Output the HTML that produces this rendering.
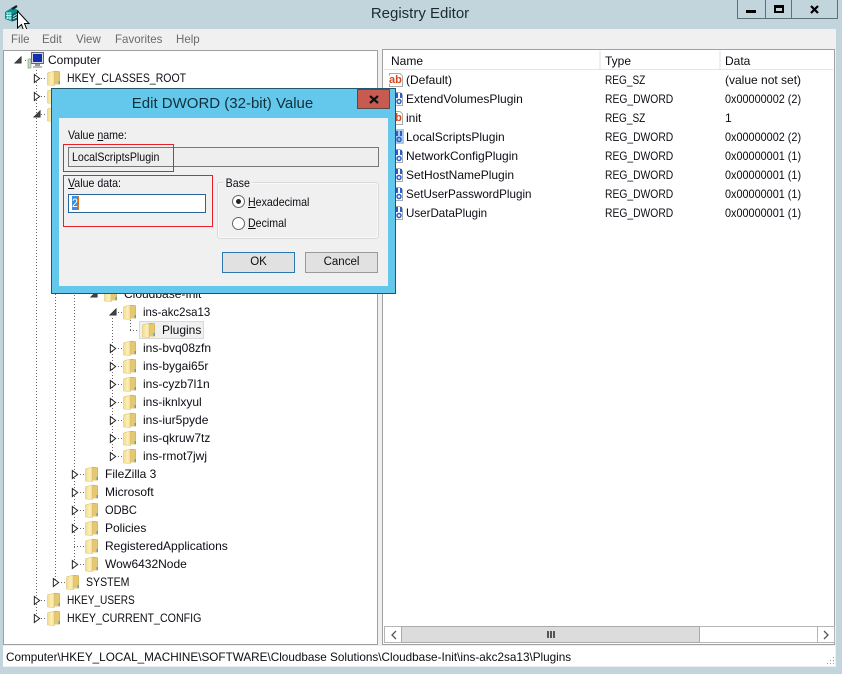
<!DOCTYPE html>
<html><head><meta charset="utf-8"><title>Registry Editor</title>
<style>
html,body{margin:0;padding:0}
body{width:842px;height:674px;overflow:hidden;position:relative;background:#c2d5dc;font-family:"Liberation Sans",sans-serif;font-size:12px;color:#0c0c14}
div,svg,span.a{position:absolute}
.t{position:absolute;line-height:18px;height:18px;white-space:nowrap;transform-origin:0 50%}
.m{color:#6a6a6a;top:30px;transform:scaleX(.96)}
.v{position:absolute;width:1px;background:repeating-linear-gradient(to bottom,#666 0 1px,transparent 1px 3px)}
.h{position:absolute;height:1px;background:repeating-linear-gradient(to right,#666 0 1px,transparent 1px 3px)}
u{text-decoration:underline}
.k{transform:scaleX(.875)}
.dw{transform:scaleX(.86)}
.sz{transform:scaleX(.84)}
.hx{transform:scaleX(.905)}
.dl{font-size:12px;transform:scaleX(.885)}
.btn{position:absolute;top:252px;width:71px;height:19px;line-height:19px;text-align:center;background:#e1e1e1;border:1px solid #9a9a9a;font-size:11.500px}
</style></head><body>
<svg width="0" height="0" style="position:absolute">
<defs>
<linearGradient id="fg" x1="0" x2="1" y1="0" y2="0"><stop offset="0" stop-color="#f3dc8c"/><stop offset=".6" stop-color="#fbf0bc"/><stop offset="1" stop-color="#f0d888"/></linearGradient>
<symbol id="f" viewBox="0 0 14 16"><path d="M1 2.500 L8 1 L13 1.500 V14.500 H1 Z" fill="#c9a64e"/><path d="M.5 3 L7.500 1 V15.500 L.5 15 Z" fill="url(#fg)" stroke="#e0c878" stroke-width=".6"/><path d="M8 2 H12.500 V14.500 H8 Z" fill="#e6c872"/><rect x="11.500" y="11" width="1.500" height="3" fill="#4fa3dc"/></symbol>
<symbol id="e" viewBox="0 0 9 11"><path d="M1.500 1 L7.500 5.500 L1.500 10 Z" fill="#fff" stroke="#222" stroke-width="1.100"/></symbol>
<symbol id="o" viewBox="0 0 9 9"><path d="M8 1 V8 H1 Z" fill="#444" stroke="#333"/></symbol>
<symbol id="ab" viewBox="0 0 16 16"><path d="M1.500 1.500 H12 L14.500 4 V14.500 H1.500 Z" fill="#fff" stroke="#aaa"/><rect x="1" y="3.500" width="13" height="8" fill="#fff"/><text x="1" y="11" font-family="Liberation Sans" font-size="11" font-weight="bold" fill="#d8481f">ab</text></symbol>
<symbol id="d" viewBox="0 0 16 16"><path d="M1.500 1.500 H12 L14.500 4 V14.500 H1.500 Z" fill="#fff" stroke="#aaa"/><rect x="8" y="2" width="2" height="5" fill="#2a5fd0"/><rect x="12" y="2" width="2" height="5" fill="#2a5fd0"/><circle cx="11" cy="10.500" r="2" fill="none" stroke="#2a5fd0" stroke-width="1.500"/></symbol>
</defs></svg>

<!-- title bar -->
<svg style="left:4px;top:5px" width="17" height="17" viewBox="0 0 17 17"><path d="M1 7 L9 2 L15 6 V14 L8 16.500 L1 14 Z" fill="#0d8f8c"/><path d="M8 9.500 L15 6 V14 L8 16.500 Z" fill="#0b5a62"/><path d="M2 8 H7.500 M2 10.500 H7.500 M2 13 H7.500 M3.800 7.500 V14 M6 7.500 V15 M9 11.500 L14.500 8.500 M9 14 L14.500 11" stroke="#c8f4f2" stroke-width=".9"/><path d="M8 4 L13 1" stroke="#123" stroke-width="2.200"/></svg>
<svg style="left:16px;top:10px" width="14" height="23" viewBox="0 0 14 23"><path d="M1.500 1 V18 L5.500 14.500 L8 21.500 L11 20 L8.500 13.500 L13 13.500 Z" fill="#fff" stroke="#000" stroke-width="1"/></svg>
<div class="t" style="left:0;width:840px;top:5px;font-size:15px;text-align:center;color:#1c2a30">Registry Editor</div>
<div style="left:737px;top:0;width:99px;height:18px;border:solid #5e7078;border-width:0 1px 1px 1px"></div>
<div style="left:765px;top:0;width:1px;height:19px;background:#5e7078"></div>
<div style="left:791px;top:0;width:1px;height:19px;background:#5e7078"></div>
<div style="left:746px;top:10px;width:10px;height:3px;background:#000"></div>
<div style="left:774px;top:5px;width:6px;height:3px;border:2px solid #000;border-top-width:3px"></div>
<svg style="left:810px;top:5px" width="9" height="9" viewBox="0 0 9 9"><path d="M1 1 L8 8 M8 1 L1 8" stroke="#000" stroke-width="2.200"/></svg>

<!-- client -->
<div style="left:3px;top:29px;width:833px;height:638px;background:#f0f0f0"></div>
<span class="t m" style="left:11px">File</span>
<span class="t m" style="left:42px">Edit</span>
<span class="t m" style="left:76px">View</span>
<span class="t m" style="left:115px">Favorites</span>
<span class="t m" style="left:176px">Help</span>

<!-- tree pane -->
<div style="left:3px;top:50px;width:373px;height:593px;background:#fff;border:1px solid #a0a0a0"></div>
<!-- list pane -->
<div style="left:382px;top:49px;width:451px;height:594px;background:#fff;border:1px solid #a0a0a0"></div>

<!-- tree lines -->
<div class="v" style="left:36px;top:67px;height:552px"></div>
<div class="v" style="left:55px;top:120px;height:463px"></div>
<div class="v" style="left:74px;top:280px;height:285px"></div>
<div class="v" style="left:112px;top:318px;height:139px"></div>
<div class="v" style="left:130px;top:320px;height:10px"></div>
<div class="h" style="left:130px;top:330px;width:10px"></div>
<div class="h" style="left:25px;top:60px;width:5px"></div>
<div class="h" style="left:41px;top:78px;width:5px"></div>
<div class="h" style="left:41px;top:96px;width:5px"></div>
<div class="h" style="left:41px;top:114px;width:5px"></div>
<div class="h" style="left:41px;top:600px;width:5px"></div>
<div class="h" style="left:41px;top:618px;width:5px"></div>
<div class="h" style="left:61px;top:582px;width:5px"></div>
<div class="h" style="left:80px;top:474px;width:5px"></div>
<div class="h" style="left:80px;top:492px;width:5px"></div>
<div class="h" style="left:80px;top:510px;width:5px"></div>
<div class="h" style="left:80px;top:528px;width:5px"></div>
<div class="h" style="left:74px;top:546px;width:11px"></div>
<div class="h" style="left:80px;top:564px;width:5px"></div>
<div class="h" style="left:118px;top:312px;width:5px"></div>
<div class="h" style="left:118px;top:348px;width:5px"></div>
<div class="h" style="left:118px;top:366px;width:5px"></div>
<div class="h" style="left:118px;top:384px;width:5px"></div>
<div class="h" style="left:118px;top:402px;width:5px"></div>
<div class="h" style="left:118px;top:420px;width:5px"></div>
<div class="h" style="left:118px;top:438px;width:5px"></div>
<div class="h" style="left:118px;top:456px;width:5px"></div>

<!-- tree expanders -->
<svg style="left:14px;top:56px" width="8" height="8"><use href="#o"/></svg>
<svg style="left:33px;top:73px" width="8" height="11"><use href="#e"/></svg>
<svg style="left:33px;top:91px" width="8" height="11"><use href="#e"/></svg>
<svg style="left:33px;top:110px" width="8" height="8"><use href="#o"/></svg>
<svg style="left:33px;top:595px" width="8" height="11"><use href="#e"/></svg>
<svg style="left:33px;top:613px" width="8" height="11"><use href="#e"/></svg>
<svg style="left:52px;top:577px" width="8" height="11"><use href="#e"/></svg>
<svg style="left:71px;top:469px" width="8" height="11"><use href="#e"/></svg>
<svg style="left:71px;top:487px" width="8" height="11"><use href="#e"/></svg>
<svg style="left:71px;top:505px" width="8" height="11"><use href="#e"/></svg>
<svg style="left:71px;top:523px" width="8" height="11"><use href="#e"/></svg>
<svg style="left:71px;top:559px" width="8" height="11"><use href="#e"/></svg>
<svg style="left:90px;top:290px" width="8" height="8"><use href="#o"/></svg>
<svg style="left:109px;top:308px" width="8" height="8"><use href="#o"/></svg>
<svg style="left:109px;top:343px" width="8" height="11"><use href="#e"/></svg>
<svg style="left:109px;top:361px" width="8" height="11"><use href="#e"/></svg>
<svg style="left:109px;top:379px" width="8" height="11"><use href="#e"/></svg>
<svg style="left:109px;top:397px" width="8" height="11"><use href="#e"/></svg>
<svg style="left:109px;top:415px" width="8" height="11"><use href="#e"/></svg>
<svg style="left:109px;top:433px" width="8" height="11"><use href="#e"/></svg>
<svg style="left:109px;top:451px" width="8" height="11"><use href="#e"/></svg>

<!-- computer icon -->
<svg style="left:27px;top:51px" width="18" height="18" viewBox="0 0 18 18"><rect x="4.500" y="1.500" width="12" height="11" fill="#d8d8e0" stroke="#667"/><rect x="6" y="3" width="9" height="8" fill="#1030b0"/><rect x="8" y="13" width="5" height="2" fill="#999"/><rect x="6" y="15" width="9" height="2" fill="#bbb"/><rect x="1" y="8" width="3" height="9" fill="#c8d8c8" stroke="#7a9a7a" stroke-width=".6"/></svg>

<!-- folders -->
<svg style="left:47px;top:70px" width="14" height="16"><use href="#f"/></svg>
<svg style="left:47px;top:88px" width="14" height="16"><use href="#f"/></svg>
<svg style="left:47px;top:106px" width="14" height="16"><use href="#f"/></svg>
<svg style="left:47px;top:592px" width="14" height="16"><use href="#f"/></svg>
<svg style="left:47px;top:610px" width="14" height="16"><use href="#f"/></svg>
<svg style="left:66px;top:574px" width="14" height="16"><use href="#f"/></svg>
<svg style="left:85px;top:466px" width="14" height="16"><use href="#f"/></svg>
<svg style="left:85px;top:484px" width="14" height="16"><use href="#f"/></svg>
<svg style="left:85px;top:502px" width="14" height="16"><use href="#f"/></svg>
<svg style="left:85px;top:520px" width="14" height="16"><use href="#f"/></svg>
<svg style="left:85px;top:538px" width="14" height="16"><use href="#f"/></svg>
<svg style="left:85px;top:556px" width="14" height="16"><use href="#f"/></svg>
<svg style="left:104px;top:286px" width="14" height="16"><use href="#f"/></svg>
<svg style="left:123px;top:304px" width="14" height="16"><use href="#f"/></svg>
<svg style="left:123px;top:340px" width="14" height="16"><use href="#f"/></svg>
<svg style="left:123px;top:358px" width="14" height="16"><use href="#f"/></svg>
<svg style="left:123px;top:376px" width="14" height="16"><use href="#f"/></svg>
<svg style="left:123px;top:394px" width="14" height="16"><use href="#f"/></svg>
<svg style="left:123px;top:412px" width="14" height="16"><use href="#f"/></svg>
<svg style="left:123px;top:430px" width="14" height="16"><use href="#f"/></svg>
<svg style="left:123px;top:448px" width="14" height="16"><use href="#f"/></svg>

<!-- selected -->
<div style="left:139px;top:321px;width:63px;height:16px;background:#f0f0f0;border:1px solid #d9d9d9"></div>
<svg style="left:142px;top:322px" width="14" height="16"><use href="#f"/></svg>

<!-- tree text -->
<span class="t" style="left:48px;top:51px">Computer</span>
<span class="t k" style="left:67px;top:69px">HKEY_CLASSES_ROOT</span>
<span class="t" style="left:124px;top:285px">Cloudbase-Init</span>
<span class="t" style="left:143px;top:303px;transform:scaleX(.95)">ins-akc2sa13</span>
<span class="t" style="left:162px;top:321px">Plugins</span>
<span class="t" style="left:143px;top:339px">ins-bvq08zfn</span>
<span class="t" style="left:143px;top:357px">ins-bygai65r</span>
<span class="t" style="left:143px;top:375px">ins-cyzb7l1n</span>
<span class="t" style="left:143px;top:393px">ins-iknlxyul</span>
<span class="t" style="left:143px;top:411px">ins-iur5pyde</span>
<span class="t" style="left:143px;top:429px">ins-qkruw7tz</span>
<span class="t" style="left:143px;top:447px">ins-rmot7jwj</span>
<span class="t" style="left:105px;top:465px">FileZilla 3</span>
<span class="t" style="left:105px;top:483px">Microsoft</span>
<span class="t" style="left:105px;top:501px;transform:scaleX(.92)">ODBC</span>
<span class="t" style="left:105px;top:519px">Policies</span>
<span class="t" style="left:105px;top:537px">RegisteredApplications</span>
<span class="t" style="left:105px;top:555px">Wow6432Node</span>
<span class="t" style="left:86px;top:573px;transform:scaleX(.88)">SYSTEM</span>
<span class="t" style="left:67px;top:591px;transform:scaleX(.84)">HKEY_USERS</span>
<span class="t" style="left:67px;top:609px;transform:scaleX(.888)">HKEY_CURRENT_CONFIG</span>

<!-- list header -->
<div style="left:599px;top:51px;width:2px;height:18px;background:#efefef"></div>
<div style="left:719px;top:51px;width:2px;height:18px;background:#efefef"></div>
<div style="left:384px;top:69px;width:449px;height:1px;background:#e5e5e5"></div>
<span class="t" style="left:391px;top:52px">Name</span>
<span class="t" style="left:605px;top:52px">Type</span>
<span class="t" style="left:725px;top:52px">Data</span>

<!-- list rows -->
<svg style="left:388px;top:72px" width="16" height="16"><use href="#ab"/></svg>
<svg style="left:388px;top:91px" width="16" height="16"><use href="#d"/></svg>
<svg style="left:388px;top:110px" width="16" height="16"><use href="#ab"/></svg>
<div style="left:396px;top:129px;width:8px;height:15px;background:#a8c8f0"></div>
<svg style="left:388px;top:129px" width="16" height="16" viewBox="0 0 16 16"><rect x="8" y="2" width="2" height="5" fill="#2a5fd0"/><rect x="12" y="2" width="2" height="5" fill="#2a5fd0"/><circle cx="11" cy="10.500" r="2" fill="none" stroke="#2a5fd0" stroke-width="1.500"/></svg>
<svg style="left:388px;top:148px" width="16" height="16"><use href="#d"/></svg>
<svg style="left:388px;top:167px" width="16" height="16"><use href="#d"/></svg>
<svg style="left:388px;top:186px" width="16" height="16"><use href="#d"/></svg>
<svg style="left:388px;top:205px" width="16" height="16"><use href="#d"/></svg>
<span class="t" style="left:406px;top:71px">(Default)</span><span class="t sz" style="left:605px;top:71px">REG_SZ</span><span class="t" style="left:725px;top:71px">(value not set)</span>
<span class="t" style="left:406px;top:90px">ExtendVolumesPlugin</span><span class="t dw" style="left:605px;top:90px">REG_DWORD</span><span class="t hx" style="left:725px;top:90px">0x00000002 (2)</span>
<span class="t" style="left:406px;top:109px">init</span><span class="t sz" style="left:605px;top:109px">REG_SZ</span><span class="t" style="left:725px;top:109px">1</span>
<span class="t" style="left:406px;top:128px">LocalScriptsPlugin</span><span class="t dw" style="left:605px;top:128px">REG_DWORD</span><span class="t hx" style="left:725px;top:128px">0x00000002 (2)</span>
<span class="t" style="left:406px;top:147px">NetworkConfigPlugin</span><span class="t dw" style="left:605px;top:147px">REG_DWORD</span><span class="t hx" style="left:725px;top:147px">0x00000001 (1)</span>
<span class="t" style="left:406px;top:166px">SetHostNamePlugin</span><span class="t dw" style="left:605px;top:166px">REG_DWORD</span><span class="t hx" style="left:725px;top:166px">0x00000001 (1)</span>
<span class="t" style="left:406px;top:185px;transform:scaleX(.97)">SetUserPasswordPlugin</span><span class="t dw" style="left:605px;top:185px">REG_DWORD</span><span class="t hx" style="left:725px;top:185px">0x00000001 (1)</span>
<span class="t" style="left:406px;top:204px;transform:scaleX(.965)">UserDataPlugin</span><span class="t dw" style="left:605px;top:204px">REG_DWORD</span><span class="t hx" style="left:725px;top:204px">0x00000001 (1)</span>

<!-- scrollbar -->
<div style="left:384px;top:626px;background:#fff;border:1px solid #b5b5b5;box-sizing:border-box;width:451px;height:17px"></div>
<div style="left:401px;top:626px;width:299px;height:17px;background:#dcdcdc;border:1px solid #aaa;box-sizing:border-box"></div>
<div style="left:817px;top:626px;width:1px;height:17px;background:#b5b5b5"></div>
<svg style="left:390px;top:630px" width="8" height="10"><path d="M6 1 L2 5 L6 9" fill="none" stroke="#555" stroke-width="1.300"/></svg>
<svg style="left:822px;top:630px" width="8" height="10"><path d="M2 1 L6 5 L2 9" fill="none" stroke="#555" stroke-width="1.300"/></svg>
<div style="left:547px;top:631px;width:2px;height:7px;background:#555"></div>
<div style="left:550px;top:631px;width:2px;height:7px;background:#555"></div>
<div style="left:553px;top:631px;width:2px;height:7px;background:#555"></div>

<!-- status -->
<div style="left:3px;top:646px;width:832px;height:20px;background:#fff"></div>
<span class="t" style="left:6px;top:648px;transform:scaleX(.977)">Computer\HKEY_LOCAL_MACHINE\SOFTWARE\Cloudbase Solutions\Cloudbase-Init\ins-akc2sa13\Plugins</span>
<svg style="left:825px;top:656px" width="10" height="10"><path d="M8 1h1v1h-1z M5 4h1v1h-1z M8 4h1v1h-1z M2 7h1v1h-1z M5 7h1v1h-1z M8 7h1v1h-1z" fill="#999"/></svg>

<!-- dialog -->
<div style="left:51px;top:88px;width:343px;height:204px;background:#63c8eb;border:1px solid #22566c"></div>
<div class="t" style="left:52px;top:95px;width:343px;text-align:center;font-size:15px;color:#12303a;transform:translateX(-1px)">Edit DWORD (32-bit) Value</div>
<div style="left:357px;top:89px;width:33px;height:20px;background:#c75b50;border:1px solid #5a4a48;box-sizing:border-box"></div>
<svg style="left:369px;top:95px" width="10" height="9"><path d="M1 1 L9 8 M9 1 L1 8" stroke="#111" stroke-width="2.200"/></svg>
<div style="left:59px;top:118px;width:329px;height:168px;background:#f0f0f0"></div>

<span class="t dl" style="left:68px;top:126px">Value <u>n</u>ame:</span>
<div style="left:68px;top:147px;width:309px;height:18px;background:#eeeeee;border:1px solid #777"></div>
<span class="t dl" style="left:72px;top:148px">LocalScriptsPlugin</span>
<span class="t dl" style="left:68px;top:174px"><u>V</u>alue data:</span>
<div style="left:68px;top:194px;width:136px;height:17px;background:#fff;border:1px solid #2a6496"></div>
<div style="left:72px;top:196px;width:6px;height:14px;background:#3a8ee6"></div>
<span class="t dl" style="left:72px;top:194px;color:#fff">2</span>
<div style="left:78px;top:196px;width:1px;height:14px;background:#d07020"></div>

<div style="left:217px;top:182px;width:160px;height:55px;border:1px solid #dadada;border-radius:3px;box-shadow:inset 0 0 0 1px #f8f8f8"></div>
<span class="t dl" style="left:223px;top:174px;background:#f0f0f0;padding:0 3px">Base</span>
<div style="left:232px;top:195px;width:11px;height:11px;border-radius:50%;background:#fff;border:1px solid #666"></div>
<div style="left:236px;top:199px;width:5px;height:5px;border-radius:50%;background:#222"></div>
<span class="t dl" style="left:248px;top:193px"><u>H</u>exadecimal</span>
<div style="left:232px;top:217px;width:11px;height:11px;border-radius:50%;background:#fff;border:1px solid #666"></div>
<span class="t dl" style="left:248px;top:214px"><u>D</u>ecimal</span>

<div class="btn" style="left:222px;border-color:#2b78ad">OK</div>
<div class="btn" style="left:305px">Cancel</div>

<!-- red highlights -->
<div style="left:63px;top:144px;width:109px;height:26px;border:1px solid #e8202a"></div>
<div style="left:63px;top:175px;width:148px;height:50px;border:1px solid #e8202a"></div>
</body></html>
